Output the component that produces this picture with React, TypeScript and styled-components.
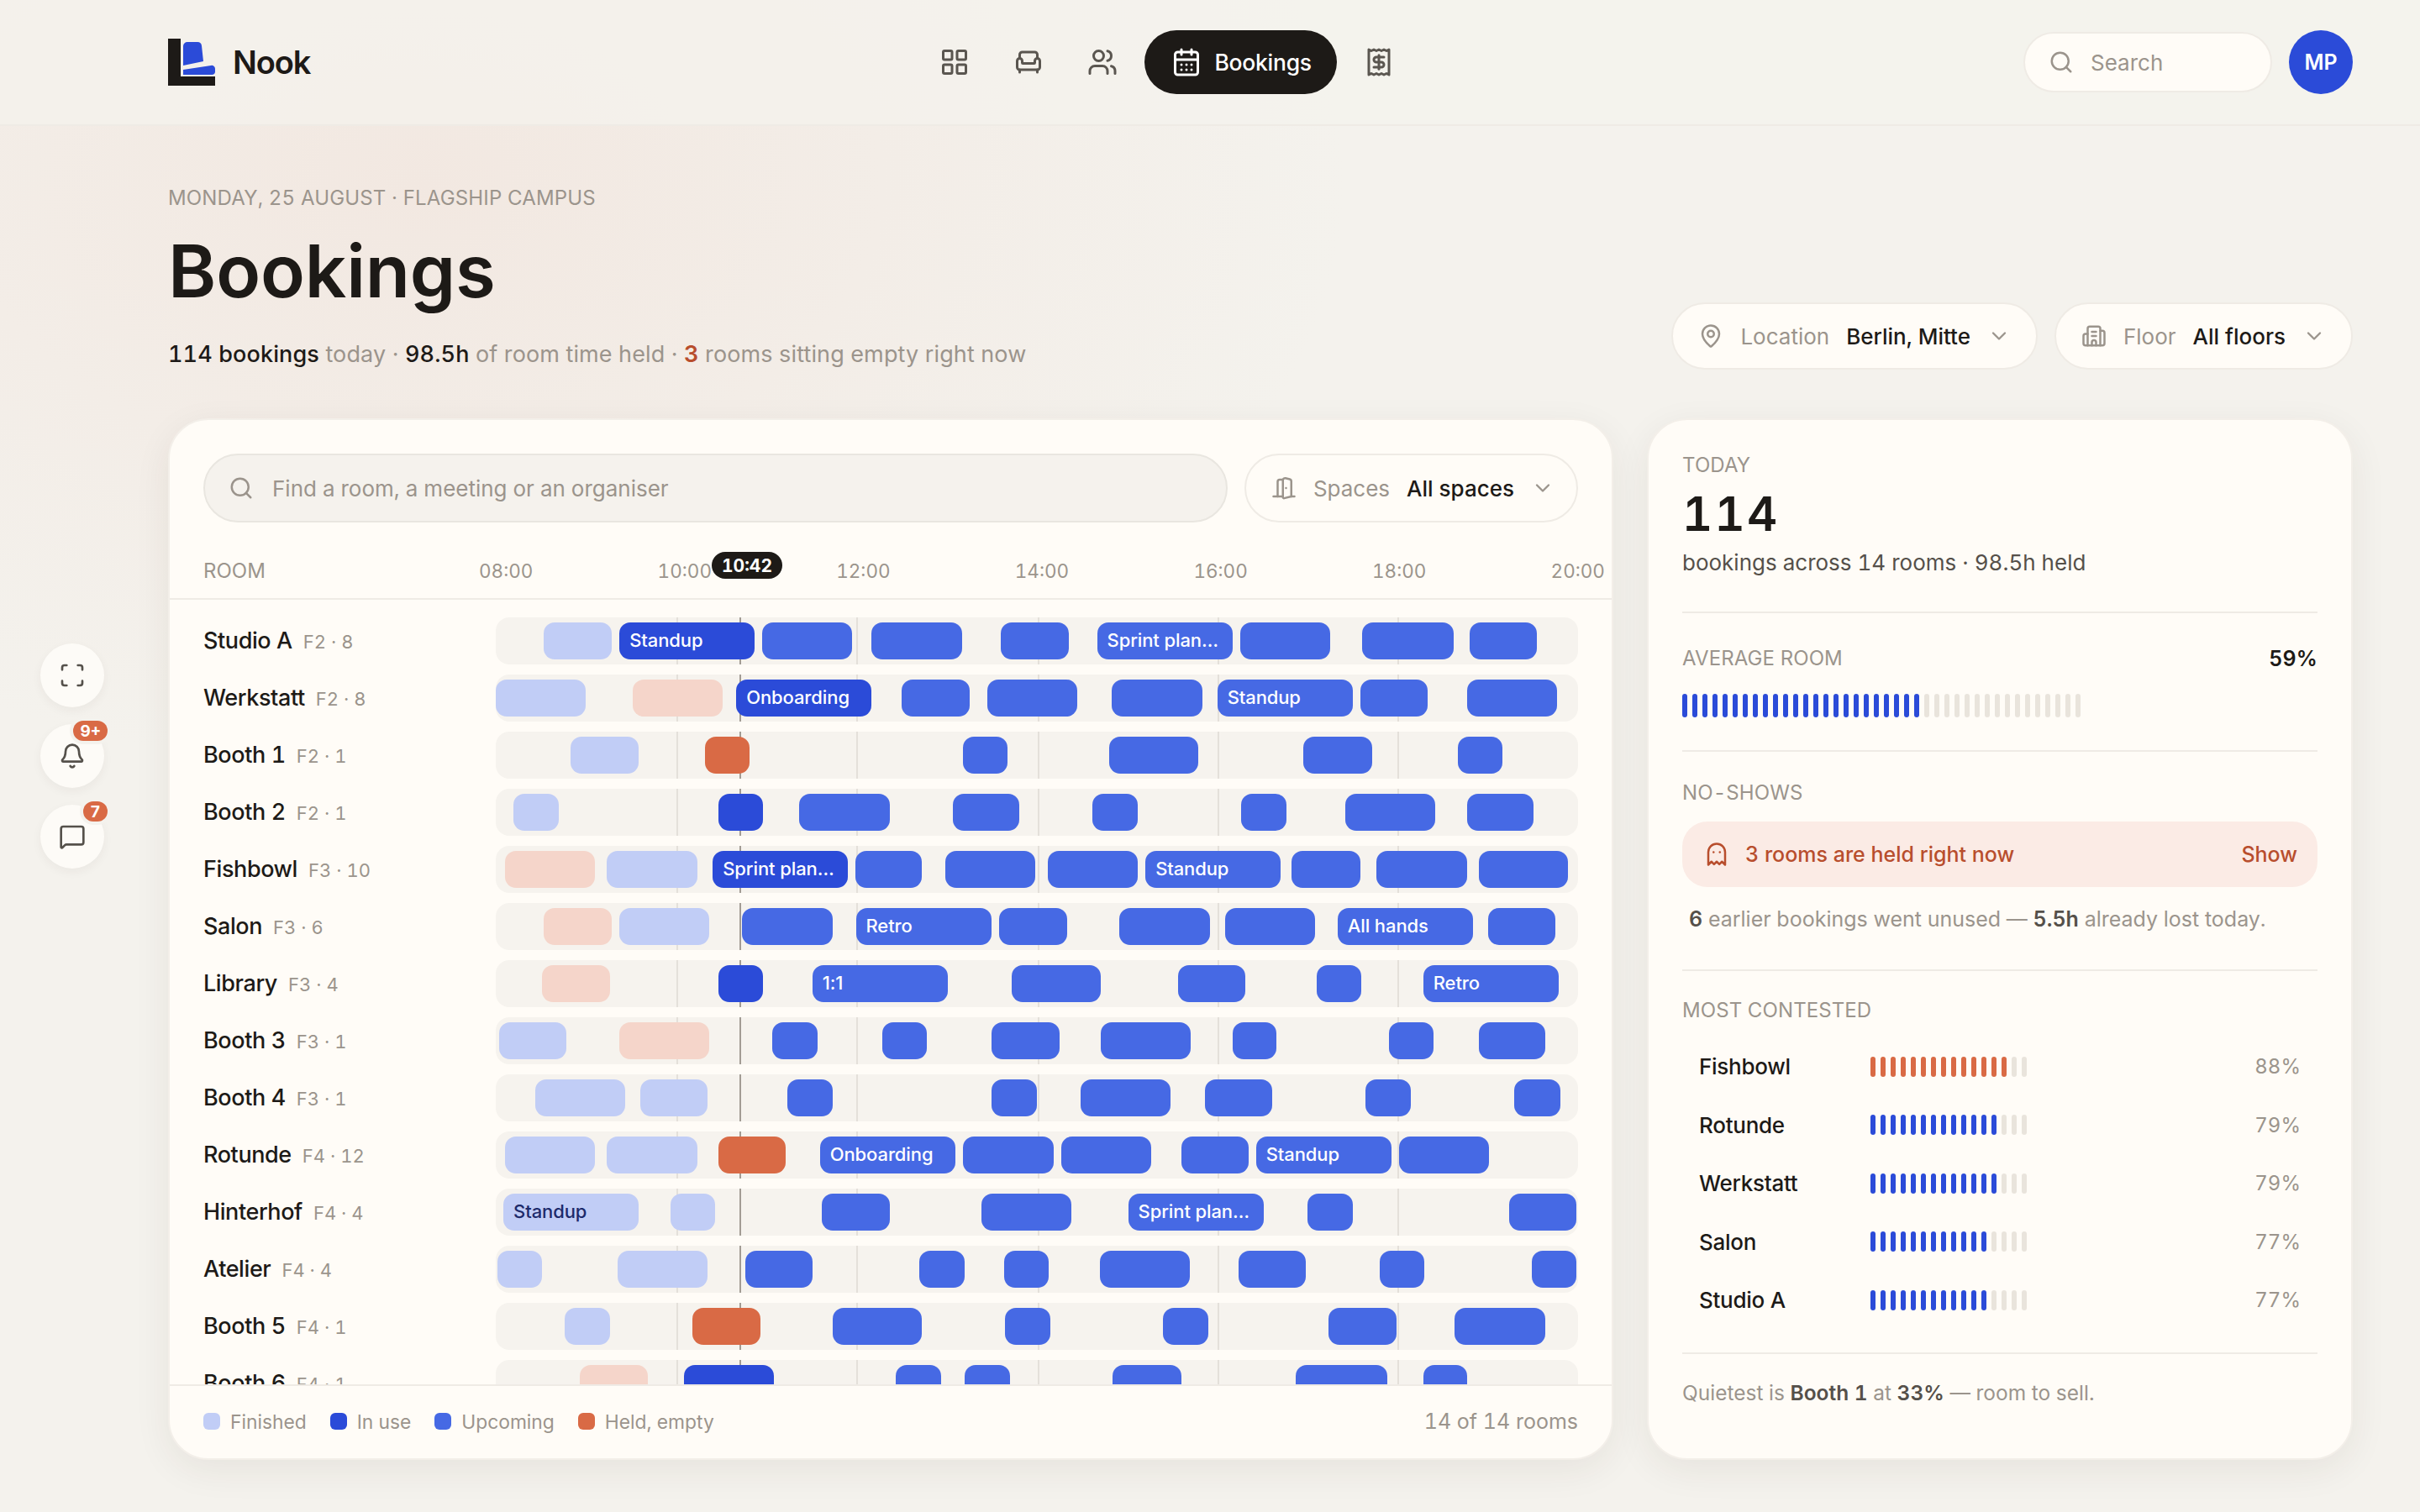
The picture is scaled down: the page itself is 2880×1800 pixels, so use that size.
import React from 'react';
import styled, { createGlobalStyle } from 'styled-components';
import {
	Armchair,
	Bell,
	Building2,
	CalendarDays,
	ChevronDown,
	DoorOpen,
	Ghost,
	LayoutGrid,
	MapPin,
	MessageSquare,
	Receipt,
	Scan,
	Search,
	Users,
} from 'lucide-react';

const ink = '#1d1a17';
const muted = '#9b948c';
const body = '#55504a';
const blue = '#2b4bd8';
const rust = '#d96a45';
const rustInk = '#b84e2d';
const hair = '#efebe5';
const card = '#fffcf7';

const GlobalStyle = createGlobalStyle`
	* { box-sizing: border-box; }
	html, body { margin: 0; padding: 0; }
	body {
		width: 2880px;
		height: 1800px;
		overflow: hidden;
		color: ${ink};
		font-family: Inter, "Liberation Sans", sans-serif;
		font-variant-numeric: tabular-nums;
		background:
			radial-gradient(1100px 700px at 500px 220px, #f2e8e1 0%, rgba(242, 232, 225, 0) 100%),
			#f4f2ed;
	}
`;

const Page = styled.div`
	position: relative;
	width: 2880px;
	height: 1800px;
`;

const TopBar = styled.header`
	display: flex;
	align-items: center;
	justify-content: space-between;
	height: 150px;
	padding: 0 80px 0 200px;
	background: rgba(244, 242, 237, 0.72);
	border-bottom: 2px solid ${hair};
`;

const Brand = styled.div`
	display: flex;
	align-items: center;
	gap: 21px;
	font-size: 38px;
	font-weight: 600;
	letter-spacing: -0.03em;
`;

const Nav = styled.nav`
	display: flex;
	align-items: center;
	gap: 12px;
`;

const NavIcon = styled.div`
	display: flex;
	align-items: center;
	justify-content: center;
	width: 76px;
	height: 76px;
	color: #5a5650;
`;

const NavActive = styled.div`
	display: flex;
	align-items: center;
	gap: 15px;
	height: 76px;
	padding: 0 30px 0 32px;
	border-radius: 38px;
	background: ${ink};
	color: #fff;
	font-size: 26.5px;
	font-weight: 500;
	letter-spacing: -0.01em;
`;

const TopRight = styled.div`
	display: flex;
	align-items: center;
	gap: 20px;
`;

const TopSearch = styled.div`
	display: flex;
	align-items: center;
	gap: 20px;
	width: 296px;
	height: 72px;
	padding: 0 28px;
	border: 2px solid ${hair};
	border-radius: 36px;
	background: ${card};
	color: ${muted};
	font-size: 26px;
`;

const Avatar = styled.div`
	display: flex;
	align-items: center;
	justify-content: center;
	width: 76px;
	height: 76px;
	border-radius: 50%;
	background: ${blue};
	color: #fff;
	font-size: 25px;
	font-weight: 600;
`;

const Rail = styled.aside`
	position: absolute;
	left: 48px;
	top: 766px;
	display: flex;
	flex-direction: column;
	gap: 20px;
`;

const RailButton = styled.div`
	position: relative;
	display: flex;
	align-items: center;
	justify-content: center;
	width: 76px;
	height: 76px;
	border-radius: 50%;
	background: #fdfbf7;
	color: #55514b;
	box-shadow: 0 4px 12px rgba(60, 45, 30, 0.05);
`;

const RailBadge = styled.span`
	position: absolute;
	top: -4px;
	right: -4px;
	display: flex;
	align-items: center;
	justify-content: center;
	min-width: 29px;
	height: 24px;
	padding: 0 8px;
	border-radius: 12px;
	background: ${rust};
	color: #fff;
	font-size: 19px;
	font-weight: 700;
	box-shadow: 0 0 0 4px #f4f2ed;
`;

const Main = styled.main`
	padding: 70px 80px 0 200px;
`;

const Heading = styled.div`
	display: flex;
	align-items: flex-end;
	justify-content: space-between;
`;

const Eyebrow = styled.div`
	height: 32px;
	line-height: 32px;
	color: ${muted};
	font-size: 24px;
	letter-spacing: 0.16px;
`;

const Title = styled.h1`
	height: 98px;
	margin: 22px 0 0;
	line-height: 98px;
	font-size: 87px;
	font-weight: 600;
	letter-spacing: -0.002em;
`;

const Summary = styled.p`
	height: 38px;
	margin: 30px 0 0;
	line-height: 40px;
	color: ${muted};
	font-size: 27px;
	letter-spacing: 0.13px;
`;

const Strong = styled.b`
	color: ${ink};
	font-weight: 500;
`;

const Warn = styled.b`
	color: ${rustInk};
	font-weight: 600;
`;

const Filters = styled.div`
	display: flex;
	gap: 20px;
`;

const Picker = styled.div<{ $tall?: boolean }>`
	display: flex;
	align-items: center;
	height: ${(p) => (p.$tall ? 82 : 80)}px;
	padding: 0 ${(p) => (p.$tall ? 26 : 30)}px 0 30px;
	border: 2px solid ${hair};
	border-radius: 41px;
	background: ${card};
	color: ${muted};
	font-size: 26px;
	white-space: nowrap;
`;

const PickerLabel = styled.span`
	margin: 0 20px 0 20px;
`;

const PickerValue = styled.span`
	margin-right: 20px;
	color: ${ink};
	font-weight: 500;
`;

const Columns = styled.div`
	display: grid;
	grid-template-columns: 1720px 840px;
	gap: 40px;
	height: 1240px;
	margin-top: 58px;
`;

const Panel = styled.section`
	display: flex;
	flex-direction: column;
	min-height: 0;
	overflow: hidden;
	border: 2px solid #f3efe9;
	border-radius: 48px;
	background: ${card};
	box-shadow: 0 12px 44px rgba(60, 45, 30, 0.07);
`;

const Toolbar = styled.div`
	display: flex;
	gap: 20px;
	padding: 40px 40px 0;
`;

const RoomSearch = styled.div`
	display: flex;
	flex: 1;
	align-items: center;
	gap: 22px;
	height: 82px;
	padding: 0 28px;
	border: 2px solid #e9e6e0;
	border-radius: 41px;
	background: #f5f2ed;
	color: ${muted};
	font-size: 26px;
`;

const AxisRow = styled.div`
	position: relative;
	display: flex;
	align-items: center;
	height: 92px;
	padding: 37px 40px 13px;
	border-bottom: 2px solid ${hair};
	color: ${muted};
	font-size: 24px;
`;

const AxisRoom = styled.span`
	flex: none;
	width: 328px;
`;

const AxisHours = styled.div`
	display: flex;
	flex: 1;
	justify-content: space-between;
	margin-right: -32px;
	font-size: 22.5px;
`;

const NowPill = styled.span`
	position: absolute;
	left: 645px;
	top: 35px;
	display: flex;
	align-items: center;
	justify-content: center;
	width: 84px;
	height: 32px;
	border-radius: 16px;
	background: ${ink};
	color: #fff;
	font-size: 21px;
	font-weight: 700;
`;

const RoomList = styled.div`
	display: flex;
	flex: 1;
	flex-direction: column;
	gap: 12px;
	min-height: 0;
	overflow: hidden;
	padding: 21px 40px 0;
`;

const RoomRow = styled.div`
	display: grid;
	flex: none;
	grid-template-columns: 348px 1fr;
	align-items: center;
	height: 56px;
`;

const RoomLabel = styled.div`
	display: flex;
	align-items: baseline;
	gap: 13px;
	margin-bottom: 2px;
`;

const RoomName = styled.span`
	font-size: 27px;
	font-weight: 500;
	letter-spacing: -0.015em;
`;

const RoomMeta = styled.span`
	color: ${muted};
	font-size: 22px;
`;

const Track = styled.div`
	position: relative;
	height: 56px;
	border-radius: 16px;
	background: #f6f3ee;
`;

const HourLine = styled.i<{ $now?: boolean }>`
	position: absolute;
	top: 0;
	bottom: 0;
	width: 2px;
	background: ${(p) => (p.$now ? '#a29c94' : '#e4e0da')};
`;

type BarKind = 'done' | 'pale' | 'now' | 'next' | 'held';

const barColours: Record<BarKind, string> = {
	done: '#c1cdf6',
	pale: '#f5d5ca',
	now: '#2b4bd8',
	next: '#4669e4',
	held: '#d96a45',
};

const Bar = styled.div<{ $kind: BarKind }>`
	position: absolute;
	top: 6px;
	height: 44px;
	padding: 0 12px;
	border-radius: 13px;
	background: ${(p) => barColours[p.$kind]};
	color: ${(p) => (p.$kind === 'done' ? '#1d2a6b' : '#fff')};
	font-size: 22px;
	font-variant-numeric: normal;
	font-weight: 500;
	line-height: 43px;
	letter-spacing: -0.005em;
	white-space: nowrap;
`;

const Legend = styled.footer`
	display: flex;
	flex: none;
	align-items: center;
	justify-content: space-between;
	height: 88px;
	padding: 0 40px 2px;
	border-top: 2px solid ${hair};
	color: ${muted};
	font-size: 22.8px;
`;

const LegendKeys = styled.div`
	display: flex;
	gap: 28px;
`;

const LegendKey = styled.span`
	display: flex;
	align-items: center;
	gap: 12px;
`;

const Swatch = styled.i<{ $kind: BarKind }>`
	width: 20px;
	height: 20px;
	border-radius: 6px;
	background: ${(p) => barColours[p.$kind]};
`;

const RoomCount = styled.span`
	font-size: 25px;
`;

const Side = styled(Panel)`
	padding: 0 40px;
`;

const Block = styled.div<{ $height: number }>`
	flex: none;
	height: ${(p) => p.$height}px;
	border-bottom: 2px solid ${hair};
`;

const LastBlock = styled.div`
	display: flex;
	flex: 1;
	align-items: center;
	padding-bottom: 32px;
	color: ${muted};
	font-size: 24.5px;
`;

const Caption = styled.div<{ $top: number }>`
	display: flex;
	justify-content: space-between;
	padding-top: ${(p) => p.$top}px;
	line-height: 32px;
	color: ${muted};
	font-size: 24px;
	letter-spacing: 0.1px;
`;

const CaptionValue = styled.span`
	color: ${ink};
	font-size: 25px;
	font-weight: 600;
`;

const BigNumber = styled.div`
	margin-top: 8px;
	line-height: 68px;
	font-size: 56px;
	font-weight: 600;
	letter-spacing: 0.04em;
`;

const TodayLine = styled.div`
	margin-top: 6px;
	line-height: 36px;
	color: ${body};
	font-size: 26px;
`;

const Ticks = styled.div<{ $height: number }>`
	display: flex;
	flex: none;
	gap: 6px;
	height: ${(p) => p.$height}px;
`;

const Tick = styled.i<{ $colour: string }>`
	flex: none;
	width: 6px;
	height: 100%;
	border-radius: 3px;
	background: ${(p) => p.$colour};
`;

const AverageTicks = styled.div`
	margin-top: 26px;
`;

const HeldBanner = styled.div`
	display: flex;
	align-items: center;
	height: 78px;
	margin-top: 18px;
	padding: 0 24px 0 26px;
	border-radius: 30px;
	background: #fbebe5;
	color: ${rustInk};
	font-size: 25px;
	font-weight: 500;
`;

const BannerText = styled.span`
	flex: 1;
	margin-left: 19px;
`;

const HeldNote = styled.div`
	margin-top: 20px;
	padding-left: 8px;
	line-height: 36px;
	color: ${muted};
	font-size: 25px;
`;

const NoteStrong = styled.b`
	color: ${body};
	font-weight: 600;
`;

const Contested = styled.div`
	margin-top: 16px;
	padding: 0 20px;
`;

const ContestedRow = styled.div`
	display: grid;
	grid-template-columns: 204px 1fr auto;
	align-items: center;
	height: 69.5px;
`;

const ContestedName = styled.span`
	font-size: 26px;
	font-weight: 500;
	letter-spacing: -0.01em;
`;

const ContestedValue = styled.span`
	color: ${muted};
	font-size: 24px;
`;

type Booking = [number, number, BarKind, string?];

// start and end of each booking on an axis where the whole track is 1565 units
const rooms: { name: string; meta: string; bookings: Booking[] }[] = [
	{ name: 'Studio A', meta: 'F2 · 8', bookings: [[69, 168, 'done'], [179, 374, 'now', 'Standup'], [385, 515, 'next'], [543, 675, 'next'], [731, 829, 'next'], [870, 1066, 'next', 'Sprint plan…'], [1077, 1207, 'next'], [1254, 1386, 'next'], [1409, 1507, 'next']] },
	{ name: 'Werkstatt', meta: 'F2 · 8', bookings: [[0, 130, 'done'], [198, 328, 'pale'], [348, 543, 'now', 'Onboarding'], [587, 686, 'next'], [711, 841, 'next'], [891, 1022, 'next'], [1044, 1240, 'next', 'Standup'], [1251, 1348, 'next'], [1405, 1535, 'next']] },
	{ name: 'Booth 1', meta: 'F2 · 1', bookings: [[108, 207, 'done'], [303, 367, 'held'], [676, 741, 'next'], [887, 1017, 'next'], [1169, 1268, 'next'], [1392, 1457, 'next']] },
	{ name: 'Booth 2', meta: 'F2 · 1', bookings: [[26, 91, 'done'], [322, 387, 'now'], [439, 570, 'next'], [661, 758, 'next'], [863, 929, 'next'], [1078, 1144, 'next'], [1229, 1359, 'next'], [1405, 1502, 'next']] },
	{ name: 'Fishbowl', meta: 'F3 · 10', bookings: [[13, 143, 'pale'], [160, 292, 'done'], [314, 509, 'now', 'Sprint plan…'], [520, 617, 'next'], [650, 780, 'next'], [799, 929, 'next'], [940, 1135, 'next', 'Standup'], [1152, 1251, 'next'], [1274, 1405, 'next'], [1422, 1552, 'next']] },
	{ name: 'Salon', meta: 'F3 · 6', bookings: [[69, 168, 'pale'], [179, 309, 'done'], [356, 487, 'next'], [521, 717, 'next', 'Retro'], [728, 827, 'next'], [902, 1033, 'next'], [1055, 1185, 'next'], [1218, 1414, 'next', 'All hands'], [1436, 1533, 'next']] },
	{ name: 'Library', meta: 'F3 · 4', bookings: [[67, 165, 'pale'], [322, 387, 'now'], [458, 654, 'next', '1:1'], [746, 876, 'next'], [987, 1085, 'next'], [1188, 1252, 'next'], [1342, 1538, 'next', 'Retro']] },
	{ name: 'Booth 3', meta: 'F3 · 1', bookings: [[5, 102, 'done'], [179, 309, 'pale'], [400, 466, 'next'], [559, 624, 'next'], [717, 816, 'next'], [876, 1006, 'next'], [1066, 1130, 'next'], [1292, 1357, 'next'], [1422, 1519, 'next']] },
	{ name: 'Booth 4', meta: 'F3 · 1', bookings: [[57, 187, 'done'], [209, 306, 'done'], [422, 487, 'next'], [717, 783, 'next'], [846, 976, 'next'], [1026, 1124, 'next'], [1259, 1324, 'next'], [1474, 1540, 'next']] },
	{ name: 'Rotunde', meta: 'F4 · 12', bookings: [[13, 143, 'done'], [160, 292, 'done'], [322, 419, 'held'], [469, 665, 'next', 'Onboarding'], [676, 807, 'next'], [818, 948, 'next'], [992, 1089, 'next'], [1100, 1296, 'next', 'Standup'], [1307, 1437, 'next']] },
	{ name: 'Hinterhof', meta: 'F4 · 4', bookings: [[11, 207, 'done', 'Standup'], [253, 317, 'done'], [472, 570, 'next'], [703, 833, 'next'], [915, 1111, 'next', 'Sprint plan…'], [1174, 1240, 'next'], [1466, 1563, 'next']] },
	{ name: 'Atelier', meta: 'F4 · 4', bookings: [[2, 67, 'done'], [176, 306, 'done'], [361, 458, 'next'], [613, 678, 'next'], [735, 800, 'next'], [874, 1004, 'next'], [1075, 1172, 'next'], [1279, 1344, 'next'], [1499, 1564, 'next']] },
	{ name: 'Booth 5', meta: 'F4 · 1', bookings: [[100, 165, 'done'], [284, 383, 'held'], [487, 617, 'next'], [737, 802, 'next'], [965, 1031, 'next'], [1205, 1303, 'next'], [1387, 1518, 'next']] },
	{ name: 'Booth 6', meta: 'F4 · 1', bookings: [[122, 220, 'pale'], [272, 402, 'now'], [579, 644, 'next'], [678, 744, 'next'], [893, 992, 'next'], [1158, 1290, 'next'], [1342, 1406, 'next']] },
];

const hourMarks = [262, 522, 784, 1045, 1305];
const nowMark = 353;
const percent = (units: number) => `${(units / 1566) * 100}%`;

const hours = ['08:00', '10:00', '12:00', '14:00', '16:00', '18:00', '20:00'];

const contested = [
	{ name: 'Fishbowl', value: 88, filled: 14, colour: rust },
	{ name: 'Rotunde', value: 79, filled: 13, colour: blue },
	{ name: 'Werkstatt', value: 79, filled: 13, colour: blue },
	{ name: 'Salon', value: 77, filled: 12, colour: blue },
	{ name: 'Studio A', value: 77, filled: 12, colour: blue },
];

const TickBar: React.FC<{ total: number; filled: number; colour: string; height: number }> = ({
	total,
	filled,
	colour,
	height,
}) => (
	<Ticks $height={height}>
		{Array.from({ length: total }, (_, i) => (
			<Tick key={i} $colour={i < filled ? colour : '#e9e4dc'} />
		))}
	</Ticks>
);

const Logo = () => (
	<svg width="56" height="56" viewBox="0 0 56 56">
		<path d="M0 0h15v45h41v11H0z" fill={ink} />
		<path d="M18 9a5 5 0 0 1 5-5h12a5 5 0 0 1 5 4.5L42 27 18 32z" fill={blue} />
		<path d="M18 37l33-5a4 4 0 0 1 5 4v4a4 4 0 0 1-4 3H18z" fill={blue} />
	</svg>
);

export default function App() {
	return (
		<Page>
			<GlobalStyle />
			<TopBar>
				<Brand>
					<Logo />
					Nook
				</Brand>
				<Nav>
					<NavIcon>
						<LayoutGrid size={36} />
					</NavIcon>
					<NavIcon>
						<Armchair size={36} />
					</NavIcon>
					<NavIcon>
						<Users size={36} />
					</NavIcon>
					<NavActive>
						<CalendarDays size={36} />
						Bookings
					</NavActive>
					<NavIcon>
						<Receipt size={36} />
					</NavIcon>
				</Nav>
				<TopRight>
					<TopSearch>
						<Search size={30} />
						Search
					</TopSearch>
					<Avatar>MP</Avatar>
				</TopRight>
			</TopBar>

			<Rail>
				<RailButton>
					<Scan size={32} />
				</RailButton>
				<RailButton>
					<Bell size={32} />
					<RailBadge>9+</RailBadge>
				</RailButton>
				<RailButton>
					<MessageSquare size={32} />
					<RailBadge>7</RailBadge>
				</RailButton>
			</Rail>

			<Main>
				<Heading>
					<div>
						<Eyebrow>MONDAY, 25 AUGUST · FLAGSHIP CAMPUS</Eyebrow>
						<Title>Bookings</Title>
						<Summary>
							<Strong>114 bookings</Strong> today · <Strong>98.5h</Strong> of room time held ·{' '}
							<Warn>3</Warn> rooms sitting empty right now
						</Summary>
					</div>
					<Filters>
						<Picker>
							<MapPin size={30} />
							<PickerLabel>Location</PickerLabel>
							<PickerValue>Berlin, Mitte</PickerValue>
							<ChevronDown size={28} />
						</Picker>
						<Picker>
							<Building2 size={30} />
							<PickerLabel>Floor</PickerLabel>
							<PickerValue>All floors</PickerValue>
							<ChevronDown size={28} />
						</Picker>
					</Filters>
				</Heading>

				<Columns>
					<Panel>
						<Toolbar>
							<RoomSearch>
								<Search size={30} />
								Find a room, a meeting or an organiser
							</RoomSearch>
							<Picker $tall>
								<DoorOpen size={30} />
								<PickerLabel>Spaces</PickerLabel>
								<PickerValue>All spaces</PickerValue>
								<ChevronDown size={28} />
							</Picker>
						</Toolbar>
						<AxisRow>
							<AxisRoom>ROOM</AxisRoom>
							<AxisHours>
								{hours.map((h) => (
									<span key={h}>{h}</span>
								))}
							</AxisHours>
							<NowPill>10:42</NowPill>
						</AxisRow>
						<RoomList>
							{rooms.map((room) => (
								<RoomRow key={room.name}>
									<RoomLabel>
										<RoomName>{room.name}</RoomName>
										<RoomMeta>{room.meta}</RoomMeta>
									</RoomLabel>
									<Track>
										{hourMarks.map((m) => (
											<HourLine key={m} style={{ left: percent(m) }} />
										))}
										<HourLine $now style={{ left: percent(nowMark) }} />
										{room.bookings.map(([start, end, kind, label]) => (
											<Bar
												key={start}
												$kind={kind}
												style={{ left: percent(start), width: percent(end - start) }}
											>
												{label}
											</Bar>
										))}
									</Track>
								</RoomRow>
							))}
						</RoomList>
						<Legend>
							<LegendKeys>
								<LegendKey>
									<Swatch $kind="done" />
									Finished
								</LegendKey>
								<LegendKey>
									<Swatch $kind="now" />
									In use
								</LegendKey>
								<LegendKey>
									<Swatch $kind="next" />
									Upcoming
								</LegendKey>
								<LegendKey>
									<Swatch $kind="held" />
									Held, empty
								</LegendKey>
							</LegendKeys>
							<RoomCount>14 of 14 rooms</RoomCount>
						</Legend>
					</Panel>

					<Side>
						<Block $height={230}>
							<Caption $top={38}>TODAY</Caption>
							<BigNumber>114</BigNumber>
							<TodayLine>bookings across 14 rooms · 98.5h held</TodayLine>
						</Block>
						<Block $height={165}>
							<Caption $top={38}>
								AVERAGE ROOM
								<CaptionValue>59%</CaptionValue>
							</Caption>
							<AverageTicks>
								<TickBar total={40} filled={24} colour={blue} height={28} />
							</AverageTicks>
						</Block>
						<Block $height={261}>
							<Caption $top={33}>NO-SHOWS</Caption>
							<HeldBanner>
								<Ghost size={30} />
								<BannerText>3 rooms are held right now</BannerText>
								Show
							</HeldBanner>
							<HeldNote>
								<NoteStrong>6</NoteStrong> earlier bookings went unused — <NoteStrong>5.5h</NoteStrong> already lost today.
							</HeldNote>
						</Block>
						<Block $height={456}>
							<Caption $top={31}>MOST CONTESTED</Caption>
							<Contested>
								{contested.map((row) => (
									<ContestedRow key={row.name}>
										<ContestedName>{row.name}</ContestedName>
										<TickBar total={16} filled={row.filled} colour={row.colour} height={24} />
										<ContestedValue>{row.value}%</ContestedValue>
									</ContestedRow>
								))}
							</Contested>
						</Block>
						<LastBlock>
							<span>
								Quietest is <NoteStrong>Booth 1</NoteStrong> at <NoteStrong>33%</NoteStrong> — room to sell.
							</span>
						</LastBlock>
					</Side>
				</Columns>
			</Main>
		</Page>
	);
}
